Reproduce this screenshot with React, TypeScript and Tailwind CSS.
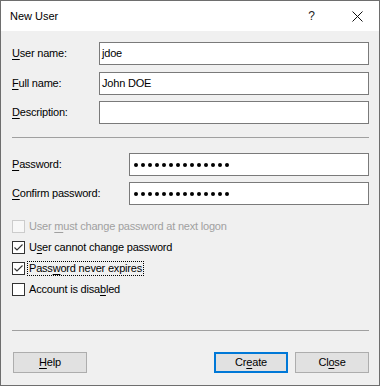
import React from 'react';

const Mn: React.FC<{ children: React.ReactNode }> = ({ children }) => (
  <span className="underline underline-offset-[2px] decoration-[1px]">{children}</span>
);

const TextRow: React.FC<{ label: React.ReactNode; value?: string; labelW: string; mt: string; dots?: number }> = ({
  label,
  value,
  labelW,
  mt,
  dots,
}) => (
  <div className={`flex items-center h-[23px] ${mt}`}>
    <div className={`${labelW} shrink-0`}>{label}</div>
    <div className="flex-1 h-[23px] bg-white border border-[#7a7a7a] flex items-center pl-[2px]">
      {dots ? (
        <div className="flex gap-[3px] pl-[2px] pt-[1px]">
          {Array.from({ length: dots }).map((_, i) => (
            <span key={i} className="w-[4px] h-[4px] rounded-full bg-black" />
          ))}
        </div>
      ) : (
        <span className="text-black">{value}</span>
      )}
    </div>
  </div>
);

const Check: React.FC<{ checked?: boolean; disabled?: boolean; focus?: boolean; children: React.ReactNode }> = ({
  checked,
  disabled,
  focus,
  children,
}) => (
  <div className="flex items-center h-[21px]">
    <div
      className={`w-[13px] h-[13px] border shrink-0 flex items-center justify-center ${
        disabled ? 'border-[#cccccc] bg-[#f7f7f7]' : 'border-[#333333] bg-white'
      }`}
    >
      {checked && (
        <svg width="11" height="11" viewBox="0 0 11 11">
          <polyline points="1.5,5.5 4,8 9.5,2.5" fill="none" stroke="#333333" strokeWidth="1.1" />
        </svg>
      )}
    </div>
    <div
      className={`ml-[2px] px-[1px] leading-[13px] border border-dotted ${
        focus ? 'border-black' : 'border-transparent'
      } ${disabled ? 'text-[#a0a0a0]' : 'text-black'}`}
    >
      {children}
    </div>
  </div>
);

const Btn: React.FC<{ primary?: boolean; children: React.ReactNode }> = ({ primary, children }) => (
  <div
    className={`w-[74px] h-[21px] bg-[#e1e1e1] flex items-center justify-center text-black ${
      primary ? 'border-2 border-[#0078d7]' : 'border border-[#adadad]'
    }`}
  >
    {children}
  </div>
);

export default function App() {
  return (
    <div className="w-[380px] h-[386px] bg-[#f0f0f0] font-['Liberation_Sans',Arial,sans-serif] text-[11px] text-black">
      <div className="w-[380px] h-[386px] border border-[#6e6e6e] flex flex-col">
        {/* Title bar */}
        <div className="h-[30px] bg-white flex items-center shrink-0">
          <span className="pl-[9px] text-[11px] text-black">New User</span>
          <div className="flex-1" />
          <span className="text-[12px] text-[#222] mr-[37px]">?</span>
          <svg width="11" height="11" viewBox="0 0 11 11" className="mr-[16px]">
            <path d="M0.5 0.5 L10.5 10.5 M10.5 0.5 L0.5 10.5" stroke="#111" strokeWidth="1" />
          </svg>
        </div>

        {/* Body */}
        <div className="flex-1 flex flex-col pl-[11px] pr-[10px] tracking-[-0.2px]">
          <TextRow labelW="w-[87px]" mt="mt-[11px]" label={<><Mn>U</Mn>ser name:</>} value="jdoe" />
          <TextRow labelW="w-[87px]" mt="mt-[7px]" label={<><Mn>F</Mn>ull name:</>} value="John DOE" />
          <TextRow labelW="w-[87px]" mt="mt-[6px]" label={<><Mn>D</Mn>escription:</>} value="" />

          <div className="mt-[13px] h-[1px] bg-[#a0a0a0]" />

          <TextRow labelW="w-[117px]" mt="mt-[15px]" label={<><Mn>P</Mn>assword:</>} dots={14} />
          <TextRow labelW="w-[117px]" mt="mt-[6px]" label={<><Mn>C</Mn>onfirm password:</>} dots={14} />

          <div className="mt-[11px] flex flex-col">
            <Check disabled>
              User <Mn>m</Mn>ust change password at next logon
            </Check>
            <Check checked>
              U<Mn>s</Mn>er cannot change password
            </Check>
            <Check checked focus>
              Pass<Mn>w</Mn>ord never expires
            </Check>
            <Check>
              Account is disa<Mn>b</Mn>led
            </Check>
          </div>

          <div className="mt-[30px] h-[1px] bg-[#a0a0a0]" />

          <div className="mt-[21px] flex items-center">
            <div className="ml-[1px]">
              <Btn>
                <Mn>H</Mn>elp
              </Btn>
            </div>
            <div className="flex-1" />
            <div className="flex gap-[7px]">
              <Btn primary>
                Cr<Mn>e</Mn>ate
              </Btn>
              <Btn>
                Cl<Mn>o</Mn>se
              </Btn>
            </div>
          </div>
        </div>
      </div>
    </div>
  );
}
